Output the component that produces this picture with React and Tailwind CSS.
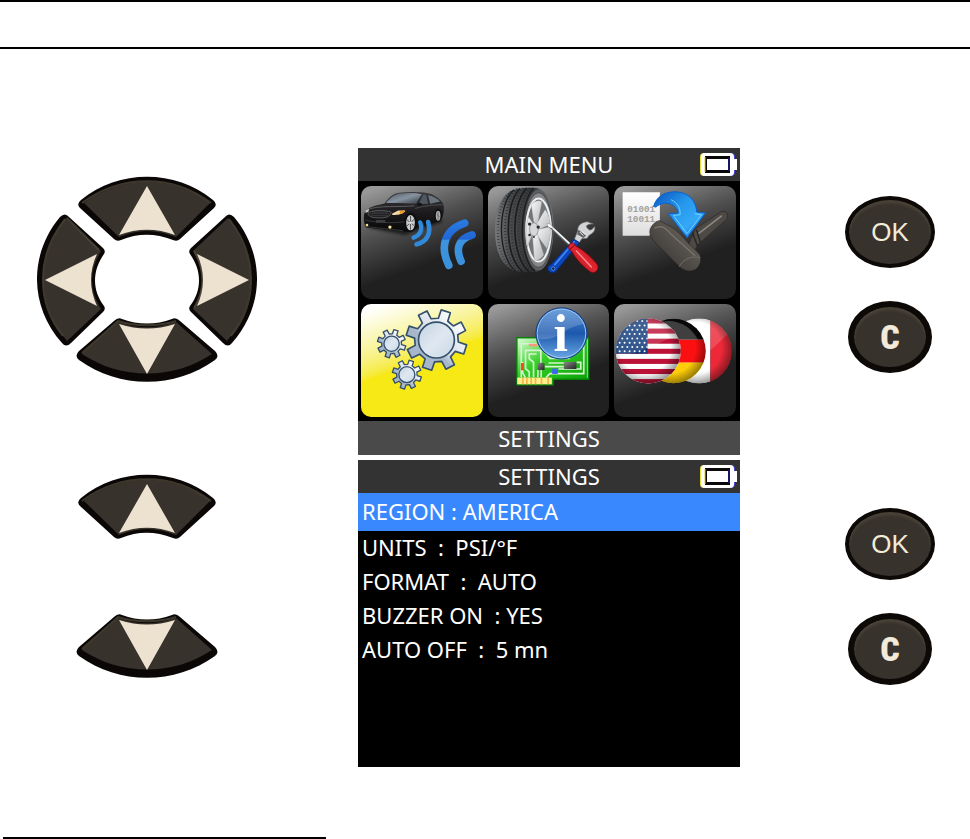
import React, { useState } from 'react';

const settings = [
  { id: 'region', text: 'REGION : AMERICA' },
  { id: 'units', text: 'UNITS  :  PSI/°F' },
  { id: 'format', text: 'FORMAT  :  AUTO' },
  { id: 'buzzer', text: 'BUZZER ON  : YES' },
  { id: 'autoOff', text: 'AUTO OFF  :  5 mn' }
];

const gearPath = (cx, cy, outer, inner) => {
  const points = [];
  for (let i = 0; i < 8; i++) {
    const mid = -72 + i * 45;
    [[-13, inner], [-9, outer], [9, outer], [13, inner]].forEach(([offset, r]) => {
      const a = ((mid + offset) * Math.PI) / 180;
      points.push(`${(cx + r * Math.cos(a)).toFixed(1)} ${(cy + r * Math.sin(a)).toFixed(1)}`);
    });
  }
  return `M${points.join('L')}Z`;
};

function Gear({ cx, cy, outer, inner, hub, stroke }) {
  return (
    <g stroke="#34506b" strokeWidth={stroke} strokeLinejoin="round">
      <path d={gearPath(cx, cy, outer, inner)} fill="url(#gearMetal)" />
      <circle cx={cx} cy={cy} r={hub} fill="url(#gearHub)" />
    </g>
  );
}

function CarIcon() {
  return (
    <svg viewBox="33 138 366 339" className="w-full h-full" aria-hidden="true">
      <defs>
        <linearGradient id="carBody" x1="0" y1="0" x2="0" y2="1">
          <stop offset="0" stopColor="#3c3a3c" />
          <stop offset="0.5" stopColor="#1d1b1d" />
          <stop offset="1" stopColor="#080808" />
        </linearGradient>
        <linearGradient id="carGlass" x1="0" y1="0" x2="1" y2="1">
          <stop offset="0" stopColor="#4b5661" />
          <stop offset="0.5" stopColor="#8793a0" />
          <stop offset="1" stopColor="#313942" />
        </linearGradient>
        <linearGradient id="wave" gradientUnits="userSpaceOnUse" x1="0" y1="240" x2="0" y2="385">
          <stop offset="0" stopColor="#2a7be0" />
          <stop offset="0.4" stopColor="#1f66d6" />
          <stop offset="0.41" stopColor="#3d93de" />
          <stop offset="1" stopColor="#3b90dc" />
        </linearGradient>
        <filter id="carShadow" x="-20%" y="-50%" width="140%" height="200%">
          <feGaussianBlur stdDeviation="5" />
        </filter>
      </defs>
      <path d="M48 262L165 285L280 245L260 225Z" fill="#000" opacity="0.6" filter="url(#carShadow)" />
      <path d="M42 225C45 208 58 199 104 190C120 170 130 160 148 158C185 153 225 155 246 162C262 170 275 181 280 190C284 205 283 222 276 237L262 246L200 264L175 275L120 270L48 262C42 252 41 238 42 225Z" fill="url(#carBody)" />
      <path d="M108 189C122 171 134 162 152 160C178 157 200 158 216 162C208 174 203 183 199 191C168 189 140 188 108 189Z" fill="url(#carGlass)" />
      <path d="M207 192L220 164C226 162 229 164 230 168L235 191Z" fill="#4d5862" />
      <path d="M235 165C249 167 262 174 271 184L241 191Z" fill="#69747e" />
      <path d="M55 208C85 195 150 202 193 197" fill="none" stroke="#5d5c60" strokeWidth="3" />
      <path d="M196 205C225 196 255 194 279 194" fill="none" stroke="#4a494c" strokeWidth="3" />
      <path d="M54 219C62 210 104 209 124 216C122 230 108 235 78 233C63 232 55 228 54 219Z" fill="#1a1a1c" stroke="#77777b" strokeWidth="2" />
      <path d="M59 221H118M62 227H114M67 216H114" stroke="#4f4f53" strokeWidth="2" />
      <path d="M127 220L145 211L166 211C163 219 150 225 127 225Z" fill="#f2d7a3" />
      <path d="M150 213L166 211C164 218 158 221 149 222Z" fill="#f09a24" />
      <path d="M46 212L57 205L56 214L47 219Z" fill="#cfc9bd" />
      <path d="M46 240C80 248 120 250 164 245M50 260L160 272" fill="none" stroke="#343438" strokeWidth="3" />
      <rect x="78" y="240" width="28" height="8" fill="#3f3f43" />
      <circle cx="51" cy="255" r="4" fill="#f6dc8c" />
      <circle cx="120" cy="261" r="5" fill="#f8e29a" />
      <ellipse cx="182" cy="247" rx="18" ry="29" fill="#0b0b0c" />
      <ellipse cx="182" cy="248" rx="13" ry="23" fill="#c9cacc" />
      <path d="M182 227V269M171 239L193 257M171 258L193 238" stroke="#54565a" strokeWidth="3" />
      <circle cx="182" cy="248" r="4" fill="#eee" />
      <ellipse cx="265" cy="226" rx="11" ry="20" fill="#0b0b0c" />
      <ellipse cx="265" cy="227" rx="7" ry="15" fill="#adafb2" />
      <path d="M265 214V240M260 221L270 232" stroke="#54565a" strokeWidth="2" />
      <ellipse cx="209" cy="193" rx="8" ry="5" fill="#151517" />
      <g fill="none" stroke="url(#wave)" strokeLinecap="round">
        <path d="M211 247C219 270 210 287 191 293" strokeWidth="13" stroke="#318ada" />
        <path d="M235 246C245 280 232 305 200 313" strokeWidth="14" stroke="#3189da" />
        <path d="M345 249C285 268 269 319 297 376" strokeWidth="23" />
        <path d="M367 285C326 297 317 325 334 364" strokeWidth="23" />
      </g>
      <path d="M218 246C225 262 222 277 216 286" fill="none" stroke="#1e63cb" strokeWidth="3" opacity="0.6" />
    </svg>
  );
}

function TireIcon() {
  return (
    <svg viewBox="4 6 366 339" className="w-full h-full" aria-hidden="true">
      <defs>
        <linearGradient id="tread" x1="0" y1="0" x2="1" y2="0">
          <stop offset="0" stopColor="#77797b" />
          <stop offset="0.25" stopColor="#4b4d4f" />
          <stop offset="0.65" stopColor="#303234" />
          <stop offset="1" stopColor="#7d7f81" />
        </linearGradient>
        <linearGradient id="rim" x1="0" y1="0" x2="1" y2="1">
          <stop offset="0" stopColor="#fafafa" />
          <stop offset="1" stopColor="#b4b6b8" />
        </linearGradient>
        <linearGradient id="redGrip" x1="0" y1="1" x2="1" y2="0">
          <stop offset="0" stopColor="#8f0008" />
          <stop offset="0.5" stopColor="#e22832" />
          <stop offset="1" stopColor="#a50009" />
        </linearGradient>
      </defs>
      <path d="M82 17C42 30 25 78 25 140C25 203 47 250 88 262L150 264C184 246 201 196 201 134C201 68 184 21 153 12C130 10 105 11 82 17Z" fill="url(#tread)" />
      <g fill="none" stroke="#1b1d1f">
        <path d="M82 17C30 62 32 220 88 262" strokeWidth="4" />
        <path d="M100 13C52 62 52 220 108 263" strokeWidth="5" />
        <path d="M120 12C70 66 74 220 128 264" strokeWidth="5" />
        <path d="M140 12C94 70 96 220 145 263" strokeWidth="4" />
      </g>
      <g fill="none" stroke="#1e2022" strokeWidth="6" strokeDasharray="2 7" opacity="0.8">
        <path d="M73 22C19 72 20 212 76 258" />
        <path d="M91 14C42 62 42 222 98 263" />
        <path d="M110 12C61 62 63 222 118 263" />
        <path d="M130 12C82 66 84 222 138 263" />
      </g>
      <ellipse cx="156" cy="138" rx="44" ry="122" fill="#5c5e60" />
      <ellipse cx="156" cy="138" rx="41" ry="112" fill="#85878a" stroke="#3c3e40" strokeWidth="2" />
      <ellipse cx="156" cy="138" rx="37" ry="95" fill="#727578" stroke="#eff0f0" strokeWidth="6" />
      <g stroke="#8a8d90" strokeWidth="1" fill="url(#rim)">
        <path d="M143 123L134 63C143 49 160 47 166 54L153 123Z" />
        <path d="M151 118L176 76C186 89 191 104 191 121L153 138Z" />
        <path d="M151 137L191 128C194 151 189 175 181 194L149 151Z" />
        <path d="M137 144L153 149L172 213C160 230 149 232 143 226Z" />
        <path d="M126 98L144 125L139 148L122 190C116 162 118 125 126 98Z" />
      </g>
      <ellipse cx="142" cy="136" rx="13" ry="20" fill="#d6d8d9" stroke="#777a7c" strokeWidth="2" />
      <g fill="#292b2d">
        <circle cx="129" cy="120" r="5" />
        <circle cx="155" cy="129" r="5" />
        <circle cx="129" cy="153" r="4" />
        <circle cx="142" cy="159" r="3" />
      </g>
      <path d="M187 123L259 190" stroke="#606366" strokeWidth="9" strokeLinecap="round" />
      <path d="M187 121L259 188" stroke="#f4f5f6" strokeWidth="5" strokeLinecap="round" />
      <path d="M181 118L192 121L201 132L193 132L184 127Z" fill="#fff" stroke="#777" strokeWidth="1" />
      <path d="M263 168L274 140C273 124 284 115 303 113L321 120C314 119 301 121 300 127C302 132 307 138 312 138C319 136 321 131 325 127C328 140 318 149 309 153L302 163L286 164L278 177Z" fill="#d3d4d5" stroke="#68696c" strokeWidth="2" />
      <path d="M276 137L299 155L291 162L272 151Z" fill="#606266" />
      <path d="M280 144L291 155M287 141L298 152" stroke="#e8e8e8" strokeWidth="3" />
      <path d="M263 166L279 176L211 259C204 271 185 267 184 254C183 248 188 244 194 242Z" fill="#0d45bd" stroke="#042d87" strokeWidth="3" />
      <path d="M263 174L205 242" stroke="#4788ed" strokeWidth="5" strokeLinecap="round" />
      <circle cx="200" cy="254" r="5" fill="#112144" stroke="#76a6f3" strokeWidth="2" />
      <path d="M249 180L260 176L270 187C293 200 317 221 333 242C340 256 326 270 314 265C292 250 267 225 256 202L245 193Z" fill="url(#redGrip)" stroke="#85000a" strokeWidth="2" />
      <path d="M270 201L315 249" stroke="#ff8c91" strokeWidth="4" strokeLinecap="round" />
      <path d="M249 197L265 183" stroke="#76000a" strokeWidth="3" />
    </svg>
  );
}

function SensorIcon() {
  return (
    <svg viewBox="207 138 366 339" className="w-full h-full" aria-hidden="true">
      <defs>
        <linearGradient id="arrowBlue" x1="0" y1="0" x2="1" y2="1">
          <stop offset="0" stopColor="#0b53bd" />
          <stop offset="0.4" stopColor="#2496ec" />
          <stop offset="0.7" stopColor="#35a9f7" />
          <stop offset="1" stopColor="#0b5fcd" />
        </linearGradient>
        <linearGradient id="sensorBody" x1="1" y1="0" x2="0" y2="1">
          <stop offset="0" stopColor="#77726b" />
          <stop offset="0.5" stopColor="#514d48" />
          <stop offset="1" stopColor="#33302d" />
        </linearGradient>
        <linearGradient id="paper" x1="0" y1="0" x2="0" y2="1">
          <stop offset="0" stopColor="#ffffff" />
          <stop offset="1" stopColor="#dedede" />
        </linearGradient>
      </defs>
      <path d="M233 156H345V255L312 287H233Z" fill="url(#paper)" />
      <path d="M345 254C334 248 322 252 314 264C311 272 312 279 314 287Z" fill="#b8b8b8" />
      <g fill="#a5a29b" fontFamily="'Liberation Mono', monospace" fontWeight="700" fontSize="28">
        <text x="247" y="216">01001</text>
        <text x="247" y="245">10011</text>
      </g>
      <path d="M437 300L452 266L528 216C544 209 552 222 547 237L461 312L449 332L428 323Z" fill="#4d4945" stroke="#292725" strokeWidth="2" />
      <path d="M462 280L530 228" stroke="#8c8881" strokeWidth="5" strokeLinecap="round" />
      <path d="M455 269L467 307M443 278L458 318" fill="none" stroke="#252321" strokeWidth="4" />
      <path d="M316 270C321 253 334 241 346 242L366 254C387 262 410 285 428 307L461 339C474 352 467 380 451 389C438 397 419 393 406 382L334 310C321 299 313 285 316 270Z" fill="url(#sensorBody)" stroke="#2d2a28" strokeWidth="2" />
      <path d="M329 265C351 253 364 265 379 283L451 347" fill="none" stroke="#827d74" strokeWidth="4" opacity="0.8" />
      <path d="M403 380C416 358 440 346 466 353" fill="none" stroke="#716c64" strokeWidth="3" />
      <path d="M326 199C335 169 359 154 394 155C430 157 454 180 456 216L482 219L427 293L371 221L400 219C398 192 358 178 333 201Z" fill="url(#arrowBlue)" stroke="#0960cf" strokeWidth="3" strokeLinejoin="round" />
      <path d="M385 226L406 224C407 202 398 188 379 179M450 221L470 224L427 281L388 229" fill="none" stroke="#6fd2ff" strokeWidth="3" />
    </svg>
  );
}

function GearsIcon() {
  return (
    <svg viewBox="33 25 366 339" className="w-full h-full" aria-hidden="true">
      <defs>
        <linearGradient id="gearMetal" x1="1" y1="0" x2="0" y2="1">
          <stop offset="0.2" stopColor="#f6f8fb" />
          <stop offset="0.5" stopColor="#d9e0ea" />
          <stop offset="0.6" stopColor="#a8b8cc" />
          <stop offset="1" stopColor="#a4b5c9" />
        </linearGradient>
        <linearGradient id="gearHub" x1="0" y1="0" x2="1" y2="1">
          <stop offset="0" stopColor="#c3d2e2" />
          <stop offset="0.5" stopColor="#dfe8f1" />
          <stop offset="1" stopColor="#c9d7e5" />
        </linearGradient>
      </defs>
      <Gear cx={125} cy={144} outer={43} inner={30} hub={23} stroke={4} />
      <Gear cx={171} cy={237} outer={44} inner={31} hub={24} stroke={4} />
      <Gear cx={260} cy={133} outer={92} inner={66} hub={54} stroke={5} />
    </svg>
  );
}

function BoardIcon() {
  return (
    <svg viewBox="4 6 366 339" className="w-full h-full" aria-hidden="true">
      <defs>
        <linearGradient id="pcb" x1="0" y1="0" x2="1" y2="1">
          <stop offset="0" stopColor="#e2ffdc" />
          <stop offset="0.4" stopColor="#35cf25" />
          <stop offset="1" stopColor="#079c07" />
        </linearGradient>
        <linearGradient id="infoBall" x1="0" y1="0" x2="0" y2="1">
          <stop offset="0" stopColor="#4f8cd5" />
          <stop offset="0.5" stopColor="#1d58ad" />
          <stop offset="1" stopColor="#6ba9e6" />
        </linearGradient>
        <linearGradient id="chip" x1="0" y1="0" x2="1" y2="1">
          <stop offset="0" stopColor="#8b8b8b" />
          <stop offset="1" stopColor="#222" />
        </linearGradient>
      </defs>
      <path d="M91 107H307V232H200V249H91Z" fill="url(#pcb)" stroke="#078408" strokeWidth="4" />
      <path d="M96 112H303V228" fill="none" stroke="#bff2b5" strokeWidth="3" opacity="0.7" />
      <g fill="none" stroke="#d6f4cf" strokeWidth="5">
        <path d="M104 226V125H150M116 226L108 212V180M128 226V210L117 200V145H163V182" />
        <path d="M141 226V181L128 170V156H150M154 226V204M164 226V205M186 183H232M175 194H232M270 181H283V201H216" />
        <path d="M179 226L190 215H292V120M170 145L190 169H250" />
      </g>
      <rect x="127" y="125" width="25" height="8" fill="#f6997c" />
      <rect x="103" y="183" width="9" height="22" fill="#f14c19" />
      <rect x="153" y="183" width="21" height="21" fill="url(#chip)" />
      <rect x="233" y="180" width="37" height="21" fill="url(#chip)" />
      <rect x="197" y="200" width="17" height="16" fill="#3968ef" />
      <rect x="92" y="227" width="104" height="20" fill="#fff08e" />
      <path d="M109 227V247M121 227V247M134 227V247M147 227V247M165 227V247M185 227V247" stroke="#f6b44c" strokeWidth="5" />
      <circle cx="225" cy="94" r="77" fill="url(#infoBall)" stroke="#123c7e" strokeWidth="3" />
      <circle cx="225" cy="94" r="73" fill="none" stroke="#9fc9f1" strokeWidth="3" />
      <path d="M154 94A71 71 0 0 1 290 65C266 72 244 79 226 94C204 108 180 114 158 111C155 106 154 100 154 94Z" fill="#fff" opacity="0.18" />
      <text
        x="223"
        y="146"
        textAnchor="middle"
        fill="#fff"
        fontFamily="'Liberation Serif', serif"
        fontWeight="700"
        fontSize="156"
      >
        i
      </text>
    </svg>
  );
}

function FlagsIcon() {
  const stars = [];
  for (let row = 0; row < 8; row++) {
    for (let col = 0; col < 7; col++) {
      stars.push([217 + col * 15 + (row % 2) * 7, 76 + row * 13]);
    }
  }

  return (
    <svg viewBox="207 25 366 339" className="w-full h-full" aria-hidden="true">
      <defs>
        <clipPath id="usClip"><circle cx="310" cy="166" r="98" /></clipPath>
        <clipPath id="deClip"><circle cx="386" cy="166" r="97" /></clipPath>
        <clipPath id="frClip"><circle cx="463" cy="166" r="98" /></clipPath>
        <clipPath id="cantonClip"><rect x="210" y="68" width="98" height="106" /></clipPath>
        <radialGradient id="ballShade" cx="0.45" cy="0.45" r="0.56">
          <stop offset="0.7" stopColor="#000" stopOpacity="0" />
          <stop offset="1" stopColor="#000" stopOpacity="0.4" />
        </radialGradient>
        <linearGradient id="ballShine" x1="0" y1="0" x2="0" y2="1">
          <stop offset="0" stopColor="#fff" stopOpacity="0.2" />
          <stop offset="1" stopColor="#fff" stopOpacity="0.12" />
        </linearGradient>
      </defs>
      <g clipPath="url(#frClip)">
        <rect x="365" y="68" width="132" height="196" fill="#fff" />
        <rect x="497" y="68" width="64" height="196" fill="#ed2939" />
        <path d="M365 68H561V105C520 140 485 185 430 205Z" fill="url(#ballShine)" />
        <circle cx="463" cy="166" r="98" fill="url(#ballShade)" />
      </g>
      <g clipPath="url(#deClip)">
        <rect x="289" y="68" width="195" height="64" fill="#090909" />
        <rect x="289" y="132" width="195" height="69" fill="#fa1010" />
        <rect x="289" y="201" width="195" height="64" fill="#ffce08" />
        <path d="M350 78C400 68 440 95 460 132H395Z" fill="#fff" opacity="0.22" />
        <circle cx="386" cy="166" r="97" fill="url(#ballShade)" />
      </g>
      <g clipPath="url(#usClip)">
        <rect x="210" y="68" width="200" height="198" fill="#fff" />
        {[0, 2, 4, 6, 8, 10, 12].map((i) => (
          <rect key={i} x="210" y={68 + i * 15.2} width="200" height="15.2" fill="#bd1238" />
        ))}
        <rect x="210" y="68" width="98" height="106" fill="#123c7b" />
        <g clipPath="url(#cantonClip)" fill="#fff">
          {stars.map(([x, y]) => (
            <circle key={`${x}-${y}`} cx={x} cy={y} r="3" />
          ))}
        </g>
        <path d="M210 68H408V115C360 128 330 160 210 185Z" fill="url(#ballShine)" />
        <circle cx="310" cy="166" r="98" fill="url(#ballShade)" />
      </g>
    </svg>
  );
}

const menuItems = [
  { id: 'vehicle', label: 'Vehicle', icon: <CarIcon /> },
  { id: 'service', label: 'Service', icon: <TireIcon /> },
  { id: 'sensor', label: 'Sensor', icon: <SensorIcon /> },
  { id: 'settings', label: 'Settings', icon: <GearsIcon /> },
  { id: 'info', label: 'Information', icon: <BoardIcon /> },
  { id: 'language', label: 'Language', icon: <FlagsIcon /> }
];

// width, height, key outline, inner face, highlighted edge and arrow of each direction
const keys = {
  up: {
    w: 138,
    h: 66,
    outer: 'M3 24C41 -7 97 -7 135 24Q140 28 136 32L102 63Q99 66 95 64C77 57 60 57 43 64Q39 66 36 63L2 32Q-2 28 3 24Z',
    face: 'M6 27C44 -1 94 -1 132 27L98 61C78 53 60 53 41 61Z',
    edge: 'M4 27C44 -2 94 -2 133 27',
    arrow: 'M69 10L97 59C78 52 60 52 41 59Z'
  },
  down: {
    w: 142,
    h: 64,
    outer: 'M3 33L38 3Q42 -1 46 1C62 7 80 7 96 1Q100 -1 104 3L139 33Q144 38 139 42C99 71 43 71 3 42Q-2 38 3 33Z',
    face: 'M6 36L42 4C62 11 80 11 100 4L136 36C97 62 45 62 6 36Z',
    edge: 'M6 35L42 3C62 9 80 9 100 3',
    arrow: 'M43 6C62 12 80 12 99 6L71 56Z'
  },
  left: {
    w: 68,
    h: 132,
    outer: 'M32 3Q28 -2 23 3C-8 40 -8 92 25 129Q29 134 34 129L66 98Q69 95 67 92C55 76 55 57 67 40Q69 37 66 34Z',
    face: 'M29 4L64 37C52 56 52 76 64 95L30 127C-1 90 -1 43 29 4Z',
    edge: 'M28 5C0 40 -2 87 26 122M30 4L62 36',
    arrow: 'M8 66L60 40C52 57 52 75 60 92Z'
  },
  right: {
    w: 68,
    h: 132,
    outer: 'M36 3Q40 -2 45 3C76 40 76 92 43 129Q39 134 34 129L2 98Q-1 95 1 92C13 76 13 57 1 40Q-1 37 2 34Z',
    face: 'M39 4C69 43 69 90 38 127L4 95C16 76 16 56 4 37Z',
    edge: 'M40 5C68 40 70 87 42 122M5 37C16 56 16 76 5 94',
    arrow: 'M60 66L8 40C16 57 16 75 8 92Z'
  }
};

function ArrowKey({ direction, onClick }) {
  const key = keys[direction];
  return (
    <button type="button" aria-label={direction} onClick={onClick} className="block cursor-pointer">
      <svg width={key.w} height={key.h} viewBox={`0 0 ${key.w} ${key.h}`} aria-hidden="true">
        <path d={key.outer} fill="#0a0706" />
        <path d={key.face} fill="#37322c" />
        <path d={key.edge} fill="none" stroke="#544d3d" strokeWidth="2" opacity="0.7" />
        <path d={key.arrow} fill="#ede1cf" />
      </svg>
    </button>
  );
}

function ConfirmKeys() {
  return (
    <div className="flex flex-col items-center gap-[33px] pt-12">
      <button
        type="button"
        className="w-[90px] h-[72px] rounded-[50%] bg-[#37322c] border-4 border-[#0d0907] shadow-[inset_0_3px_3px_#4a4439] text-[#f3ead9] font-['Liberation_Sans',Arial,sans-serif] text-[26px] leading-none cursor-pointer"
      >
        OK
      </button>
      <button
        type="button"
        className="w-[84px] h-[72px] rounded-[50%] bg-[#37322c] border-[6px] border-[#0d0907] shadow-[inset_0_3px_3px_#4a4439] text-[#f3ead9] font-[Impact,'Roboto_Condensed','Open_Sans_Condensed','Roboto',sans-serif] font-black text-[34px] leading-none cursor-pointer"
      >
        C
      </button>
    </div>
  );
}

function Battery() {
  return (
    <svg width="38" height="23" viewBox="0 0 38 23" className="absolute right-[2px] top-[5px]" aria-hidden="true">
      <rect x="0" y="0" width="32" height="23" rx="4" fill="#e8df3e" />
      <rect x="3" y="0" width="32" height="23" rx="4" fill="#4a4ad0" />
      <path d="M33 6H37V17H33Z" fill="#fff" />
      <rect x="1" y="0" width="33" height="23" rx="4" fill="#fff" />
      <rect x="5" y="3" width="25" height="17" fill="#080808" />
      <path d="M5 4V19" stroke="#d8cf3a" />
      <path d="M29 5V18" stroke="#2525c0" />
      <rect x="7" y="6" width="21" height="11" fill="#fff" />
    </svg>
  );
}

function ScreenHeader({ title }) {
  return (
    <div className="relative h-[33px] pb-[2px] bg-[#333] flex items-center justify-center">
      <h2 className="text-[22px] leading-8">{title}</h2>
      <Battery />
    </div>
  );
}

function MainMenuScreen({ selected, onSelect }) {
  return (
    <div className="bg-black text-white">
      <ScreenHeader title="MAIN MENU" />
      <div className="grid grid-cols-3 gap-[5px] pl-[3px] pr-1 pt-[5px] pb-1">
        {menuItems.map((item) => (
          <button
            key={item.id}
            type="button"
            aria-label={item.label}
            onClick={() => onSelect(item.id)}
            className={`h-[113px] rounded-[10px] overflow-hidden cursor-pointer ${
              selected === item.id
                ? 'bg-linear-160 from-white from-5% to-[#f6e915] to-50%'
                : 'bg-linear-160 from-[#989898] from-5% via-[#505050] via-35% to-[#202020] to-65%'
            }`}
          >
            {item.icon}
          </button>
        ))}
      </div>
      <p className="h-[34px] bg-[#4a4a4a] text-[22px] leading-[34px] text-center">SETTINGS</p>
    </div>
  );
}

function SettingsScreen({ current }) {
  return (
    <div className="bg-black text-white min-h-[307px]">
      <ScreenHeader title="SETTINGS" />
      <ul className="text-[22px] leading-8 whitespace-pre">
        {settings.map((item, index) => (
          <li key={item.id} className={`px-1 ${index === current ? 'bg-[#3a88fe] pt-[2px] pb-1' : 'pb-[2px]'}`}>
            {item.text}
          </li>
        ))}
      </ul>
    </div>
  );
}

function App() {
  const [selected, setSelected] = useState('settings');
  const [current, setCurrent] = useState(0);

  const move = (step) => {
    const index = menuItems.findIndex((item) => item.id === selected);
    setSelected(menuItems[(index + step + menuItems.length) % menuItems.length].id);
  };

  return (
    <div className="bg-white font-['Noto_Sans',Tahoma,sans-serif]">
      <header className="h-[49px] border-y-2 border-black"></header>

      <main className="grid grid-cols-[294px_1fr_160px] gap-y-[5px] pt-[99px]">
        <div className="flex flex-col items-center pt-7">
          <ArrowKey direction="up" onClick={() => move(-3)} />
          <div className="flex justify-between w-[220px] -my-7">
            <ArrowKey direction="left" onClick={() => move(-1)} />
            <ArrowKey direction="right" onClick={() => move(1)} />
          </div>
          <ArrowKey direction="down" onClick={() => move(3)} />
        </div>
        <div className="flex justify-center pr-[6px]">
          <div className="w-[382px]">
            <MainMenuScreen selected={selected} onSelect={setSelected} />
          </div>
        </div>
        <ConfirmKeys />

        <div className="flex flex-col items-center gap-[74px] pt-[14px]">
          <ArrowKey direction="up" onClick={() => setCurrent(Math.max(0, current - 1))} />
          <ArrowKey direction="down" onClick={() => setCurrent(Math.min(settings.length - 1, current + 1))} />
        </div>
        <div className="flex justify-center pr-[6px]">
          <div className="w-[382px]">
            <SettingsScreen current={current} />
          </div>
        </div>
        <ConfirmKeys />
      </main>

      <hr className="w-1/3 ml-[3px] mt-[70px] border-t-2 border-black" />
    </div>
  );
}

export default App;
